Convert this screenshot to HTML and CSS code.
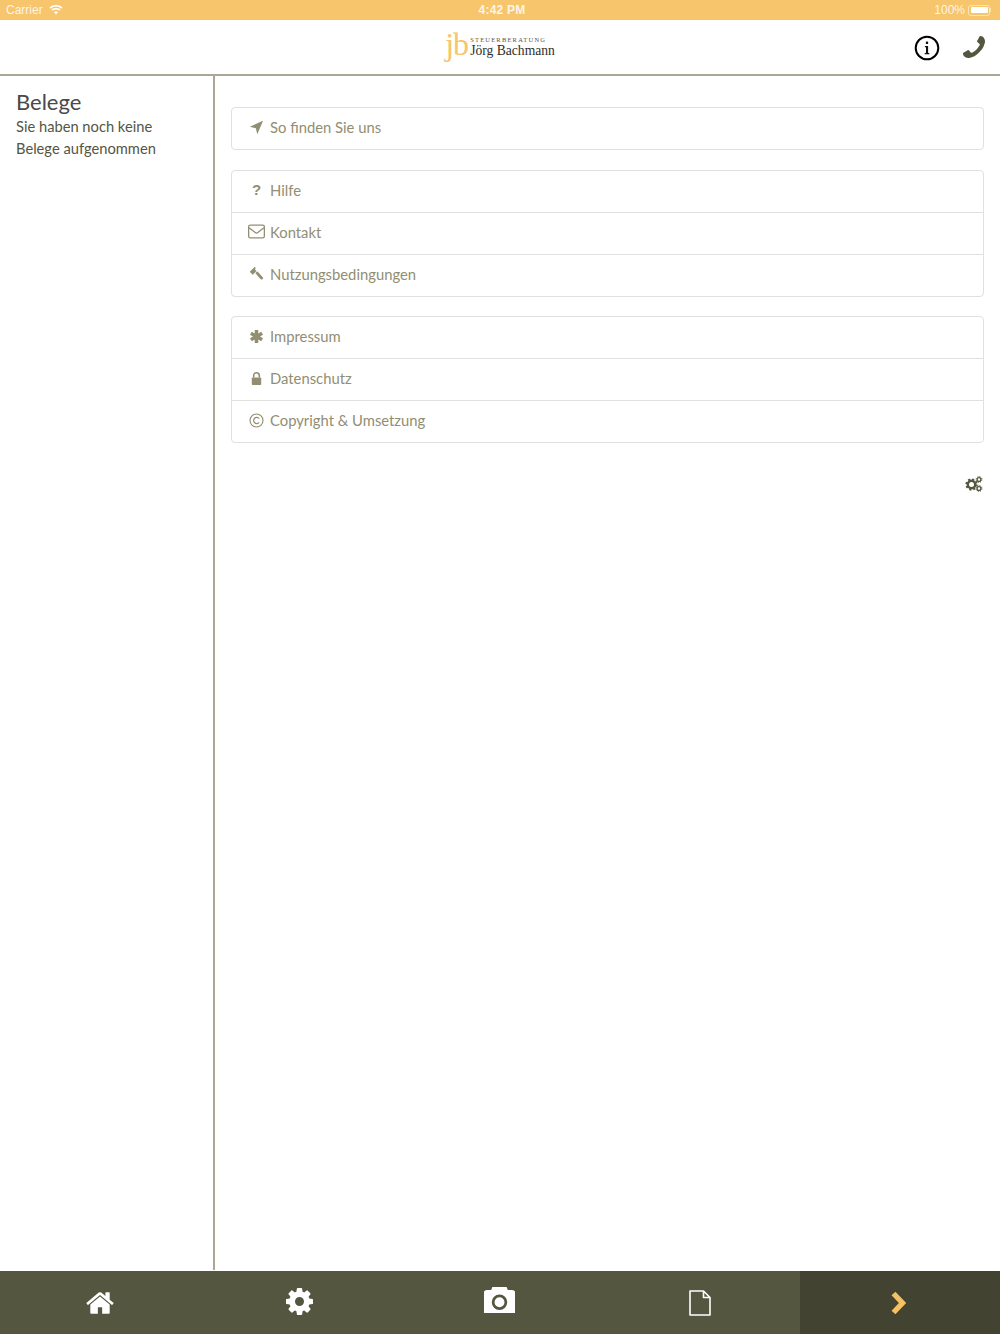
FILE: index.html
```html
<!DOCTYPE html>
<html lang="de">
<head>
<meta charset="utf-8">
<title>Steuerberatung Jörg Bachmann</title>
<link rel="stylesheet" href="styles.css">
</head>
<body>
<div class="app">
  <div class="status">
    <div class="status-left">
      <span>Carrier</span>
      <svg class="wifi" viewBox="0 0 16 12"><path d="M8 11.500 5.600 8.700a3.400 3.400 0 0 1 4.800 0zM3.900 7 2.600 5.500a7.800 7.800 0 0 1 10.800 0L12.100 7a5.900 5.900 0 0 0-8.200 0zM1.600 4.500.2 3a11.200 11.200 0 0 1 15.600 0l-1.400 1.500a9.200 9.200 0 0 0-12.800 0z"/></svg>
    </div>
    <div class="status-time">4:42 PM</div>
    <div class="status-right">
      <span>100%</span>
      <span class="battery"><span class="battery-level"></span></span>
      <span class="battery-tip"></span>
    </div>
  </div>

  <header class="header">
    <div></div>
    <div class="logo">
      <span class="logo-mark">jb</span>
      <span class="logo-text">
        <span class="logo-small">STEUERBERATUNG</span>
        <span class="logo-name">Jörg Bachmann</span>
      </span>
    </div>
    <div class="header-actions">
      <svg class="icon-info" viewBox="0 0 26 26"><circle cx="13" cy="13" r="11.300" fill="none" stroke="#000" stroke-width="2"/><rect x="11.900" y="6.600" width="2.200" height="2.400" fill="#111"/><path d="M10.900 11h3.200v7h1.200v1.200h-4.600V18H12v-5.800h-1.100z" fill="#111"/></svg>
      <svg class="icon-phone" viewBox="0 0 1408 1408"><path d="M1408 1112q0 27-10 70.500t-21 68.500q-21 50-122 106-94 51-186 51-27 0-53-3.500t-57.500-12.500-47-14.500-55.500-20.500-49-18q-98-35-175-83-127-79-264-216t-216-264q-48-77-83-175-3-9-18-49t-20.500-55.500-14.500-47-12.500-57.500-3.500-53q0-92 51-186 56-101 106-122 25-11 68.500-21t70.500-10q14 0 21 3 18 6 53 76 11 19 30 54t35 63.500 31 53.500q3 4 17.500 25t21.500 35.500 7 28.500q0 20-28.500 50t-62 55-62 53-28.500 46q0 9 5 22.500t8.500 20.500 14 24 11.500 19q76 137 174 235t235 174q2 1 19 11.500t24 14 20.500 8.500 22.500 5q18 0 46-28.500t53-62 55-62 50-28.500q14 0 28.500 7t35.500 21.500 25 17.500q25 15 53.500 31t63.500 35 54 30q70 35 76 53 3 7 3 21z" transform="matrix(-1 0 0 1 1408 0)"/></svg>
    </div>
  </header>

  <div class="content">
    <aside class="sidebar">
      <h1 class="sidebar-title">Belege</h1>
      <p class="sidebar-text">Sie haben noch keine Belege aufgenommen</p>
    </aside>
    <main class="main">
      <ul class="panel">
        <li class="row">
          <svg class="row-icon" viewBox="0 0 16 16"><path d="M15 .8 8.800 15.200 7.300 8.700.8 7.200z"/></svg>
          <span>So finden Sie uns</span>
        </li>
      </ul>
      <ul class="panel">
        <li class="row">
          <span class="row-icon row-glyph">?</span>
          <span>Hilfe</span>
        </li>
        <li class="row">
          <svg class="row-icon" viewBox="0 0 16 14"><rect x=".6" y="1" width="14.800" height="12" rx="1.500" fill="none" stroke="#918e72" stroke-width="1.200"/><path d="M1 3.500 6.800 8q1.200.9 2.400 0L15 3.500" fill="none" stroke="#918e72" stroke-width="1.200"/></svg>
          <span>Kontakt</span>
        </li>
        <li class="row">
          <svg class="row-icon" viewBox="0 0 16 16"><path d="M6.200.8.800 6.200l3.200 3.200 1.900-1.900 1.200-1.200-.1-.1 1-1-1.800-1.800 1-1zM8.800 5.600l-1.900 2 5.600 6.400q1 1 2-.1t-.1-2.100z"/></svg>
          <span>Nutzungsbedingungen</span>
        </li>
      </ul>
      <ul class="panel">
        <li class="row">
          <svg class="row-icon" viewBox="0 0 16 16"><path d="M8 1v14M2 4.500l12 7M14 4.500l-12 7" fill="none" stroke="#918e72" stroke-width="3.800"/></svg>
          <span>Impressum</span>
        </li>
        <li class="row">
          <svg class="row-icon" viewBox="0 0 16 16"><path d="M5 7V4.800a3 3 0 0 1 6 0V7" fill="none" stroke="#918e72" stroke-width="1.700"/><rect x="3" y="6.800" width="10" height="8" rx="1"/></svg>
          <span>Datenschutz</span>
        </li>
        <li class="row">
          <svg class="row-icon" viewBox="0 0 16 16"><circle cx="8" cy="8" r="6.900" fill="none" stroke="#918e72" stroke-width="1.200"/><path d="M10.800 5.900a3.300 3.300 0 1 0 0 4.200" fill="none" stroke="#918e72" stroke-width="1.300"/></svg>
          <span>Copyright &amp; Umsetzung</span>
        </li>
      </ul>
      <div class="settings">
        <svg class="icon-gears" viewBox="0 0 18 16">
          <circle cx="6.500" cy="8.500" r="3.700" fill="none" stroke="#54563f" stroke-width="2.400"/>
          <circle cx="6.500" cy="8.500" r="5.300" fill="none" stroke="#54563f" stroke-width="1.700" stroke-dasharray="2.100 2.060"/>
          <circle cx="14" cy="3.500" r="1.900" fill="none" stroke="#54563f" stroke-width="1.300"/>
          <circle cx="14" cy="3.500" r="2.900" fill="none" stroke="#54563f" stroke-width="1" stroke-dasharray="1.200 1.080"/>
          <circle cx="14" cy="12.500" r="1.900" fill="none" stroke="#54563f" stroke-width="1.300"/>
          <circle cx="14" cy="12.500" r="2.900" fill="none" stroke="#54563f" stroke-width="1" stroke-dasharray="1.200 1.080"/>
        </svg>
      </div>
    </main>
  </div>

  <nav class="tabbar">
    <a class="tab"><svg class="tab-home" viewBox="64 128 1664 1536"><path d="M1472 992v480q0 26-19 45t-45 19h-384v-384h-256v384h-384q-26 0-45-19t-19-45v-480q0-1 .5-3t.5-3l575-474 575 474q1 2 1 6zm223-69l-62 74q-8 9-21 11h-3q-13 0-21-7l-692-577-692 577q-12 8-24 7-13-2-21-11l-62-74q-8-10-7-23.500t11-21.500l719-599q32-26 76-26t76 26l244 204v-195q0-14 9-23t23-9h192q14 0 23 9t9 23v408l219 182q10 8 11 21.500t-7 23.500z"/></svg></a>
    <a class="tab"><svg class="tab-cog" viewBox="0 0 1536 1536"><path fill-rule="evenodd" d="M1024 768q0-106-75-181t-181-75-181 75-75 181 75 181 181 75 181-75 75-181zm512-109v222q0 12-8 23t-20 13l-185 28q-19 54-39 91 35 50 107 138 10 12 10 25t-9 23q-27 37-99 108t-94 71q-12 0-26-9l-138-108q-44 23-91 38-16 136-29 186-7 28-36 28h-222q-14 0-24.500-8.500t-11.500-21.500l-28-184q-49-16-90-37l-141 107q-10 9-25 9-14 0-25-11-126-114-165-168-7-10-7-23 0-12 8-23 15-21 51-66.500t54-70.500q-27-50-41-99l-183-27q-13-2-21-12.500t-8-23.500v-222q0-12 8-23t19-13l186-28q14-46 39-92-40-57-107-138-10-12-10-24 0-10 9-23 26-36 98.500-107.500t94.500-71.500q13 0 26 10l138 107q44-23 91-38 16-136 29-186 7-28 36-28h222q14 0 24.500 8.500t11.500 21.500l28 184q49 16 90 37l142-107q9-9 24-9 13 0 25 10 129 119 165 170 7 8 7 22 0 12-8 23-15 21-51 66.500t-54 70.500q26 50 41 98l183 28q13 2 21 12.500t8 23.500z"/></svg></a>
    <a class="tab"><svg class="tab-camera" viewBox="0 128 1792 1408"><path fill-rule="evenodd" d="M896 672q119 0 203.500 84.500t84.500 203.500-84.500 203.500-203.500 84.500-203.500-84.500-84.500-203.500 84.500-203.500 203.500-84.500zm704-416q106 0 181 75t75 181v896q0 106-75 181t-181 75h-1408q-106 0-181-75t-75-181v-896q0-106 75-181t181-75h224l51-136q19-49 69.500-84.500t103.500-35.500h512q53 0 103.500 35.500t69.500 84.500l51 136h224zm-704 1152q185 0 316.500-131.500t131.500-316.500-131.500-316.500-316.500-131.500-316.500 131.500-131.500 316.500 131.500 316.500 316.500 131.500z"/></svg></a>
    <a class="tab"><svg class="tab-file" viewBox="0 0 22 26"><path d="M1 1h13.500L21 7.500V25H1z M14.500 1v6.500H21" fill="none" stroke="#fff" stroke-width="1.600" stroke-linejoin="round"/></svg></a>
    <a class="tab tab-active"><svg class="tab-next" viewBox="0 0 18 26"><path d="M3.500 3.500 12.500 13 3.500 22.500" fill="none" stroke="#f6c163" stroke-width="5.400" stroke-linejoin="miter"/></svg></a>
  </nav>
</div>
</body>
</html>
```

FILE: styles.css
```css
* { box-sizing: border-box; }
html, body { margin: 0; height: 100%; }
body { font-family: Lato, "Noto Sans", sans-serif; background: #fff; }

.app {
  height: 1334px;
  display: grid;
  grid-template-rows: 20px 56px 1fr 63px;
  overflow: hidden;
}

.status {
  background: #f6c56c;
  color: rgba(255, 255, 255, 0.85);
  font: 12px/20px "Liberation Sans", sans-serif;
  display: grid;
  grid-template-columns: 1fr auto 1fr;
  align-items: center;
  padding: 0 9px 0 6px;
}
.status-left { display: flex; align-items: center; gap: 6px; }
.status-time { font-weight: 700; letter-spacing: 0.2px; padding-left: 7px; }
.status-right { display: flex; align-items: center; justify-content: flex-end; }
.wifi { width: 14px; height: 10px; fill: #fff; }
.battery {
  width: 22px; height: 11px;
  margin-left: 3px;
  padding: 1.500px;
  border: 1px solid rgba(255, 255, 255, 0.55);
  border-radius: 3px;
  display: flex;
}
.battery-level { flex: 1; background: #fff; border-radius: 1px; }
.battery-tip { width: 1px; height: 4px; background: rgba(255, 255, 255, 0.55); }

.header {
  display: grid;
  grid-template-columns: 1fr auto 1fr;
  align-items: center;
  background: #fff;
  border-bottom: 2px solid #aba795;
}
.logo { display: flex; align-items: center; }
.logo-mark {
  font: 400 32px/44px "Liberation Serif", serif;
  color: #f6c56c;
  letter-spacing: -1px;
  width: 25px;
  margin-top: -6px;
}
.logo-text { display: flex; flex-direction: column; font-family: "Liberation Serif", serif; }
.logo-small { font-size: 6.500px; line-height: 7px; letter-spacing: 1.200px; color: #55564a; }
.logo-name { font-size: 13.600px; line-height: 15px; color: #2e2e2a; }
.header-actions { display: flex; justify-content: flex-end; align-items: center; gap: 23px; padding-right: 15px; }
.icon-info { width: 26px; height: 26px; margin-top: 1px; }
.icon-phone { width: 22px; height: 22px; fill: #54563f; }

.content { display: grid; grid-template-columns: 215px 1fr; min-height: 0; }
.sidebar { border-right: 2px solid #aba795; padding: 12px 16px; margin-bottom: 1px; }
.sidebar-title { margin: 0 0 1px; font-size: 22px; line-height: 27px; font-weight: 400; color: #4a4a4a; }
.sidebar-text { margin: 0; font-size: 14.700px; line-height: 21.500px; color: #54563f; }

.main { padding: 31px 16px 0; display: flex; flex-direction: column; }
.panel {
  list-style: none;
  margin: 0 0 19.600px;
  padding: 0;
  border: 1px solid #e0e0e0;
  border-radius: 4px;
}
.row {
  height: 42px;
  display: flex;
  align-items: center;
  gap: 5px;
  padding: 0 0 3px 16px;
  font-size: 14.800px;
  color: #918e72;
  border-top: 1px solid #e0e0e0;
}
.row:first-child { border-top: 0; height: 41px; }
.row-icon { width: 17px; height: 15px; fill: #918e72; flex: none; }
.row-glyph { font: 700 15px/15px "Liberation Sans", sans-serif; text-align: center; }

.settings { display: flex; justify-content: flex-end; padding: 13px 1px 0 0; }
.icon-gears { width: 18px; height: 16px; }

.tabbar { display: grid; grid-template-columns: repeat(5, 1fr); background: #54563f; }
.tab { display: flex; align-items: center; justify-content: center; fill: #fff; }
.tab-active { background: #424330; }
.tab-home { width: 28px; height: 26px; }
.tab-cog { width: 27px; height: 27px; margin: 0 1px 2px 0; }
.tab-camera { width: 31px; height: 26px; margin: 0 2px 6px 0; }
.tab-file { width: 22px; height: 26px; }
.tab-next { width: 18px; height: 26px; margin-right: 2px; }
```
